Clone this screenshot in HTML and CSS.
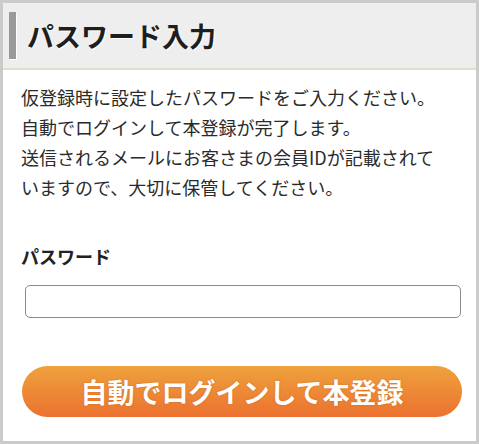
FILE: index.html
```html
<!DOCTYPE html>
<html lang="ja">
<head>
    <meta charset="UTF-8">
    <title>パスワード入力</title>
    <link rel="stylesheet" href="styles.css">
</head>

<body>
    <div class="page">
        <!--1. 見出し-->
        <h1 class="mtit">パスワード入力</h1>

        <!--2. 本文-->
        <div class="cont">
            <p class="lead">
                仮登録時に設定したパスワードをご入力ください。<br>
                自動でログインして本登録が完了します。<br>
                送信されるメールにお客さまの会員IDが記載されて<br>
                いますので、大切に保管してください。
            </p>

            <!--3. フォーム-->
            <form class="frm" action="#">
                <label class="lbl" for="pw">パスワード</label>
                <input class="ipt" type="password" id="pw" name="pw">
                <button class="btn" type="submit">自動でログインして本登録</button>
            </form>
        </div>
    </div>
</body>
</html>
```

FILE: styles.css
```css
html,
body,
h1,
p {
    margin: 0;
    padding: 0;
}

body {
    background-color: #fff;
    font-family: "Noto Sans CJK JP", "Noto Sans", sans-serif;
    color: #222;
}

/*外枠*/
.page {
    box-sizing: border-box;
    width: 479px;
    height: 444px;
    border: 3px solid #cbcbcb;
    border-top-width: 3px;
}

/*1.見出し*/
.mtit {
    display: flex;
    align-items: center;
    height: 65px;
    padding-left: 6px;
    background-color: #eeeeee;
    border-bottom: 2px solid #e2ddcc;
    font-size: 27px;
    font-weight: bold;
    color: #1e1e1e;
    text-shadow: 1px 1px 0 #fff;
}

/*左の縦線*/
.mtit::before {
    content: "";
    width: 7px;
    height: 47px;
    margin-right: 11px;
    background-color: #9a9a9a;
    box-shadow: 1px 1px 0 #fff;
}

/*2.本文*/
.cont {
    padding: 0 14px 0 18px;
}

.lead {
    margin-top: 12px;
    font-size: 18px;
    line-height: 30px;
    color: #2a2a2a;
    white-space: nowrap;
}

/*3.フォーム*/
.frm {
    display: flex;
    flex-direction: column;
}

.lbl {
    margin-top: 39px;
    font-size: 18px;
    font-weight: bold;
    line-height: 30px;
}

.ipt {
    box-sizing: border-box;
    height: 33px;
    margin: 14px 1px 0 4px;
    border: 1px solid #8a8a8a;
    border-radius: 5px;
    background-color: #fff;
    outline: none;
}

/*ボタン*/
.btn {
    height: 51px;
    margin: 48px 0 0 1px;
    border: 0;
    border-radius: 26px;
    background: linear-gradient(to bottom, #eea23d, #ec7130);
    font-family: "Noto Sans CJK JP", "Noto Sans", sans-serif;
    font-size: 27px;
    font-weight: bold;
    color: #fff;
    text-shadow: 0 0 2px rgba(160, 70, 10, .4);
    cursor: pointer;
}
```
